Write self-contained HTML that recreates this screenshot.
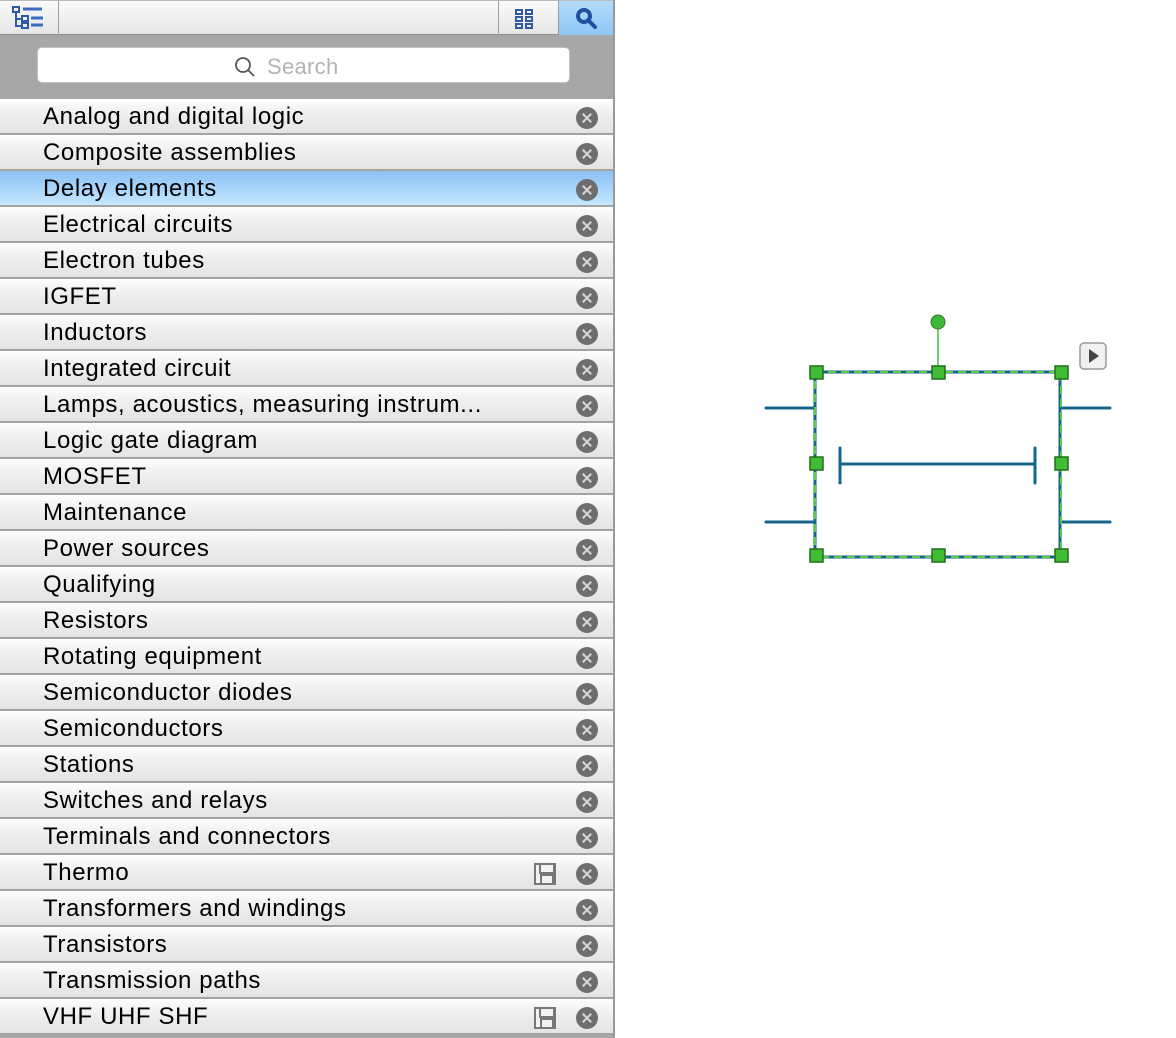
<!DOCTYPE html>
<html><head><meta charset="utf-8"><style>
*{margin:0;padding:0;box-sizing:border-box}
body{width:1176px;height:1038px;background:#fff;position:relative;overflow:hidden;font-family:"Liberation Sans",sans-serif}
#panel{position:absolute;left:0;top:0;width:615px;height:1038px;background:#a7a7a7;border-right:2px solid #9a9a9a}
#tb{position:absolute;left:0;top:0;width:613px;height:35px;background:linear-gradient(#fafafa,#e6e6e6);border-bottom:1px solid #8c8c8c;border-top:1px solid #bbb}
.tbsep{position:absolute;top:0;width:1px;height:34px;background:#a0a0a0}
#srch{position:absolute;left:37px;top:47px;width:533px;height:36px;background:#fff;border:1px solid #c4c4c4;border-radius:5px}
#srch span{position:absolute;left:229px;top:6px;font-size:22px;color:#b3b3b3;letter-spacing:0.3px}
.row{position:absolute;left:0;width:613px;height:36px;background:linear-gradient(#fdfdfd,#ececec 55%,#e4e4e4);border-bottom:2px solid #a3a3a3;font-size:24px;letter-spacing:0.6px;color:#000}
.row.sel{background:linear-gradient(#8cc0f4,#a8d4fa 50%,#c4e8fd)}
.row .t{position:absolute;left:43px;top:4px;white-space:nowrap}
.x{position:absolute;left:576px;top:8px;width:22px;height:22px;border-radius:50%;background:#6e6e6e}
.x:before,.x:after{content:"";position:absolute;left:10px;top:5px;width:2px;height:12px;background:#d6d6d6;transform:rotate(45deg)}
.x:after{transform:rotate(-45deg)}
.fl{position:absolute;left:534px;top:8px;width:22px;height:22px;border:2px solid #777;background:#f2f2f2}
.fl:before{content:"";position:absolute;left:3px;top:0;width:12px;height:7px;border:2px solid #777;border-top:0}
.fl:after{content:"";position:absolute;left:4px;bottom:0;width:10px;height:7px;border:2px solid #777;border-bottom:0}
</style></head><body>
<div id="panel">
<div id="tb">
 <svg style="position:absolute;left:12px;top:5px" width="34" height="24" viewBox="0 0 34 24" fill="none" stroke="#2f5aa8" stroke-width="2">
  <rect x="1" y="1" width="6" height="5"/><path d="M4 6v14h6M4 13h6"/><rect x="10" y="10" width="6" height="5"/><rect x="10" y="17" width="6" height="5"/>
  <path d="M11 3h19M19 12h12M19 19h12" stroke-width="3" stroke="#3d6bbf"/></svg>
 <div class="tbsep" style="left:58px"></div>
 <div class="tbsep" style="left:498px"></div>
 <svg style="position:absolute;left:514px;top:7px" width="22" height="22" viewBox="0 0 22 22" fill="none" stroke="#2f5aa8" stroke-width="2"><rect x="2" y="2" width="6" height="4"/><rect x="12" y="2" width="6" height="4"/><rect x="2" y="9" width="6" height="4"/><rect x="12" y="9" width="6" height="4"/><rect x="2" y="16" width="6" height="4"/><rect x="12" y="16" width="6" height="4"/></svg>
 <div style="position:absolute;left:558px;top:0;width:55px;height:34px;background:linear-gradient(#b4dcfb,#8dc6f5);border-left:1px solid #9a9a9a"></div>
 <svg style="position:absolute;left:574px;top:5px" width="24" height="24" viewBox="0 0 24 24" fill="none" stroke="#1f4f9e" stroke-width="4"><circle cx="10" cy="10" r="6"/><path d="M14 14l7 7" stroke-linecap="round"/></svg>
</div>
<div id="srch"><svg style="position:absolute;left:196px;top:8px" width="22" height="22" viewBox="0 0 22 22" fill="none" stroke="#555" stroke-width="1.8"><circle cx="9" cy="9" r="7"/><path d="M14 14l6 6"/></svg><span>Search</span></div>
<div id="rows"></div>
</div>
<script>
var n=["Analog and digital logic","Composite assemblies","Delay elements","Electrical circuits","Electron tubes","IGFET","Inductors","Integrated circuit","Lamps, acoustics, measuring instrum...","Logic gate diagram","MOSFET","Maintenance","Power sources","Qualifying","Resistors","Rotating equipment","Semiconductor diodes","Semiconductors","Stations","Switches and relays","Terminals and connectors","Thermo","Transformers and windings","Transistors","Transmission paths","VHF UHF SHF"];
var h="";n.forEach(function(s,i){h+='<div class="row'+(i==2?' sel':'')+'" style="top:'+(99+i*36)+'px"><span class="t">'+s+'</span>'+((s=="Thermo"||s=="VHF UHF SHF")?'<span class="fl"></span>':'')+'<span class="x"></span></div>'});
document.getElementById("rows").innerHTML=h;
</script>
<svg style="position:absolute;left:0;top:0" width="1176" height="1038">
 <g stroke="#14668c" stroke-width="3" fill="none" stroke-linecap="round">
  <rect x="815" y="372" width="245" height="185"/>
  <path d="M766 408h48M766 522h48M1062 408h48M1062 522h48M840 464h195M840 448v35M1035 448v35"/>
 </g>
 <rect x="815" y="372" width="246" height="185" fill="none" stroke="#5bcc4a" stroke-width="2" stroke-dasharray="8 5"/>
 <path d="M938 322v50" stroke="#3fbf35" stroke-width="1.5"/>
 <circle cx="938" cy="322" r="7" fill="#3db83a" stroke="#2a7a22"/>
 <g fill="#3fbe35" stroke="#236d1c" stroke-width="1.5">
  <rect x="810" y="366" width="13" height="13"/><rect x="932" y="366" width="13" height="13"/><rect x="1055" y="366" width="13" height="13"/>
  <rect x="810" y="457" width="13" height="13"/><rect x="1055" y="457" width="13" height="13"/>
  <rect x="810" y="549" width="13" height="13"/><rect x="932" y="549" width="13" height="13"/><rect x="1055" y="549" width="13" height="13"/>
 </g>
 <rect x="1080" y="343" width="26" height="26" rx="4" fill="#f0f0f0" stroke="#999" stroke-width="1.5"/>
 <path d="M1089 349v14l10-7z" fill="#444"/>
</svg>
</body></html>
